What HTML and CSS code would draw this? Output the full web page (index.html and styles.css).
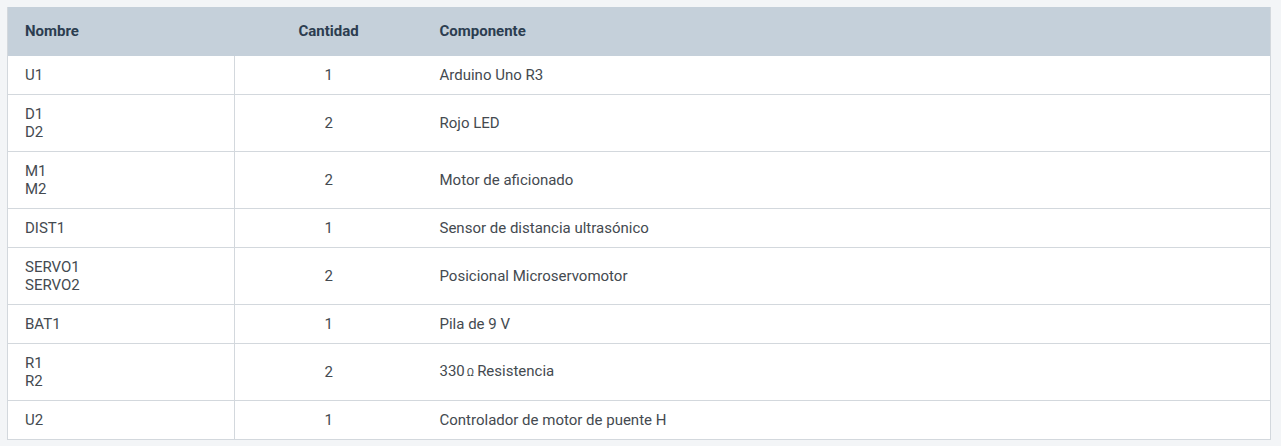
FILE: index.html
```html
<!DOCTYPE html>
<html lang="es">
<head>
<meta charset="utf-8">
<link rel="stylesheet" href="styles.css">
</head>
<body>
<table class="parts">
  <colgroup>
    <col class="c-name">
    <col class="c-qty">
    <col class="c-comp">
  </colgroup>
  <thead>
    <tr><th class="name">Nombre</th><th class="qty">Cantidad</th><th class="comp">Componente</th></tr>
  </thead>
  <tbody>
    <tr><td class="name">U1</td><td class="qty">1</td><td class="comp">Arduino Uno R3</td></tr>
    <tr><td class="name">D1<br>D2</td><td class="qty">2</td><td class="comp">Rojo LED</td></tr>
    <tr><td class="name">M1<br>M2</td><td class="qty">2</td><td class="comp">Motor de aficionado</td></tr>
    <tr><td class="name">DIST1</td><td class="qty">1</td><td class="comp">Sensor de distancia ultrasónico</td></tr>
    <tr><td class="name">SERVO1<br>SERVO2</td><td class="qty">2</td><td class="comp">Posicional Microservomotor</td></tr>
    <tr><td class="name">BAT1</td><td class="qty">1</td><td class="comp">Pila de 9 V</td></tr>
    <tr><td class="name">R1<br>R2</td><td class="qty">2</td><td class="comp">330<span class="ohm">Ω</span>Resistencia</td></tr>
    <tr><td class="name">U2</td><td class="qty">1</td><td class="comp">Controlador de motor de puente H</td></tr>
  </tbody>
</table>
</body>
</html>
```
FILE: styles.css
```css
html, body {
  margin: 0;
  padding: 0;
  background: #f3f5f7;
}
body {
  padding: 7px 10px 0 7px;
  font-family: Roboto, "Liberation Sans", sans-serif;
  font-size: 15px;
  color: #444a50;
}
.parts {
  width: 1264px;
  border-collapse: collapse;
  background: #ffffff;
  border: 1px solid #d3d8dd;
  border-top: none;
}
.c-name { width: 227px; }
.c-qty { width: 188px; }
.parts th {
  background: #c5d0da;
  color: #2c3d50;
  font-weight: 700;
  text-align: left;
  line-height: 18px;
  padding: 15px 17px 16px 17px;
}
.parts td {
  line-height: 18px;
  padding: 10px 17px 10px 17px;
  border-top: 1px solid #d3d8dd;
  vertical-align: middle;
}
.parts thead + tbody tr:first-child td { border-top: none; }
.parts td.name { border-right: 1px solid #d3d8dd; }
.parts .qty { text-align: center; padding-left: 0; padding-right: 0; }
.parts th.qty { padding-left: 0; padding-right: 0; }
.ohm {
  font-size: 11px;
  margin: 0 3px 0 2px;
}
```
